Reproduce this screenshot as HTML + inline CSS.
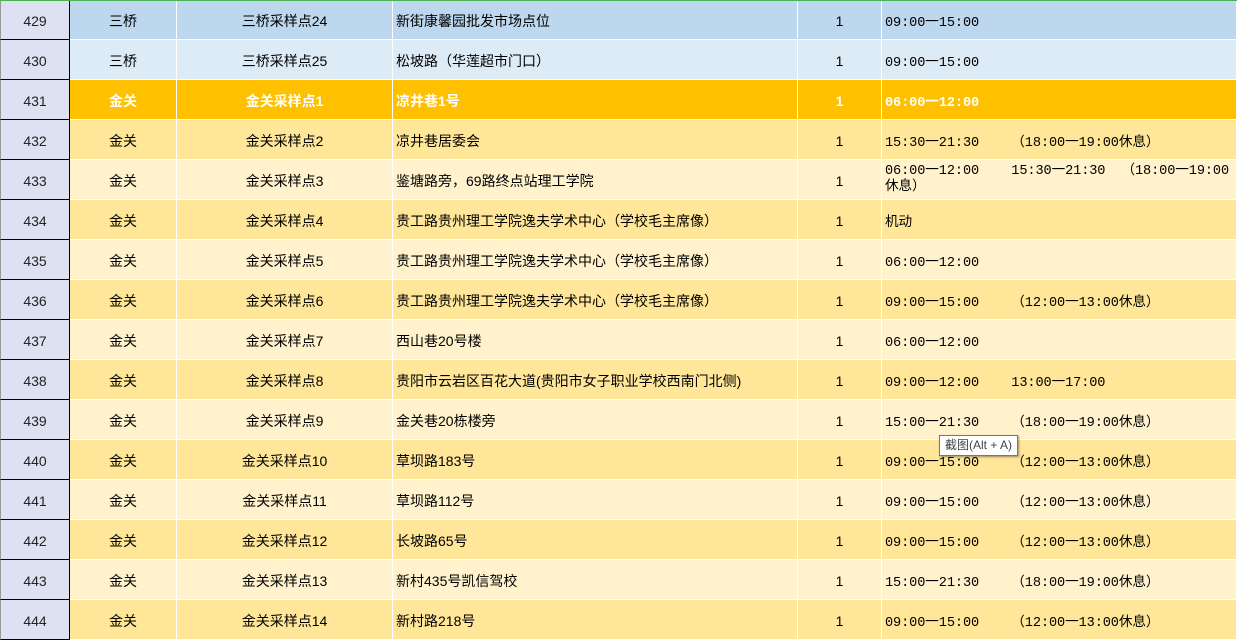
<!DOCTYPE html>
<html><head><meta charset="utf-8"><style>
*{margin:0;padding:0;box-sizing:border-box}
body{width:1237px;height:640px;overflow:hidden;background:#fff;font-family:"Liberation Sans","Noto Sans CJK SC",sans-serif;font-size:14px;color:#000;position:relative}
.r{position:absolute;left:0;width:1237px;height:40px;display:flex}
.c{height:40px;border-right:1px solid #fff;border-bottom:1px solid #fff;display:flex;align-items:center;white-space:nowrap;overflow:hidden;padding-top:2px}
.h{width:70px;background:#dde1f2;border-left:1px solid #999;border-right:1px solid #000;border-bottom:1px solid #000;justify-content:center;color:#222;font-size:14px}
.b{width:107px;justify-content:center}
.cc{width:216px;justify-content:center}
.d{width:405px;padding-left:3px}
.e{width:84px;justify-content:center}
.f{flex:1;padding-left:3px;font-family:"Liberation Mono","Noto Sans CJK SC",monospace;font-size:13.6px;letter-spacing:-0.1px}
.t1{background:#bdd7ee}.t2{background:#ddebf7}.o{background:#ffc000;color:#fff;font-weight:bold}
.y1{background:#ffe699}.y2{background:#fff2cc}
.tip{position:absolute;left:939px;top:435px;padding:1px 5px;background:#fff;border:1px solid #767676;box-shadow:1px 1px 2px rgba(0,0,0,.4);font-size:12px;color:#444;line-height:17px}
</style></head><body>
<div style="position:absolute;left:0;top:0;width:1237px;height:1px;background:#4caf50;z-index:2"></div>
<div class="r t1" style="top:0"><div class="c h">429</div><div class="c b">三桥</div><div class="c cc">三桥采样点24</div><div class="c d">新街康馨园批发市场点位</div><div class="c e">1</div><div class="c f">09:00一15:00</div></div>
<div class="r t2" style="top:40px"><div class="c h">430</div><div class="c b">三桥</div><div class="c cc">三桥采样点25</div><div class="c d">松坡路（华莲超市门口）</div><div class="c e">1</div><div class="c f">09:00一15:00</div></div>
<div class="r o" style="top:80px"><div class="c h" style="font-weight:normal;color:#222">431</div><div class="c b">金关</div><div class="c cc">金关采样点1</div><div class="c d">凉井巷1号</div><div class="c e">1</div><div class="c f" style="font-weight:bold">06:00一12:00</div></div>
<div class="r y1" style="top:120px"><div class="c h">432</div><div class="c b">金关</div><div class="c cc">金关采样点2</div><div class="c d">凉井巷居委会</div><div class="c e">1</div><div class="c f">15:30一21:30&nbsp;&nbsp;&nbsp;&nbsp;（18:00一19:00休息）</div></div>
<div class="r y2" style="top:160px"><div class="c h">433</div><div class="c b">金关</div><div class="c cc">金关采样点3</div><div class="c d">鉴塘路旁，69路终点站理工学院</div><div class="c e">1</div><div class="c f" style="line-height:16px;padding-top:0">06:00一12:00&nbsp;&nbsp;&nbsp;&nbsp;15:30一21:30&nbsp;&nbsp;（18:00一19:00<br>休息）</div></div>
<div class="r y1" style="top:200px"><div class="c h">434</div><div class="c b">金关</div><div class="c cc">金关采样点4</div><div class="c d">贵工路贵州理工学院逸夫学术中心（学校毛主席像）</div><div class="c e">1</div><div class="c f">机动</div></div>
<div class="r y2" style="top:240px"><div class="c h">435</div><div class="c b">金关</div><div class="c cc">金关采样点5</div><div class="c d">贵工路贵州理工学院逸夫学术中心（学校毛主席像）</div><div class="c e">1</div><div class="c f">06:00一12:00</div></div>
<div class="r y1" style="top:280px"><div class="c h">436</div><div class="c b">金关</div><div class="c cc">金关采样点6</div><div class="c d">贵工路贵州理工学院逸夫学术中心（学校毛主席像）</div><div class="c e">1</div><div class="c f">09:00一15:00&nbsp;&nbsp;&nbsp;&nbsp;（12:00一13:00休息）</div></div>
<div class="r y2" style="top:320px"><div class="c h">437</div><div class="c b">金关</div><div class="c cc">金关采样点7</div><div class="c d">西山巷20号楼</div><div class="c e">1</div><div class="c f">06:00一12:00</div></div>
<div class="r y1" style="top:360px"><div class="c h">438</div><div class="c b">金关</div><div class="c cc">金关采样点8</div><div class="c d">贵阳市云岩区百花大道(贵阳市女子职业学校西南门北侧)</div><div class="c e">1</div><div class="c f">09:00一12:00&nbsp;&nbsp;&nbsp;&nbsp;13:00一17:00</div></div>
<div class="r y2" style="top:400px"><div class="c h">439</div><div class="c b">金关</div><div class="c cc">金关采样点9</div><div class="c d">金关巷20栋楼旁</div><div class="c e">1</div><div class="c f">15:00一21:30&nbsp;&nbsp;&nbsp;&nbsp;（18:00一19:00休息）</div></div>
<div class="r y1" style="top:440px"><div class="c h">440</div><div class="c b">金关</div><div class="c cc">金关采样点10</div><div class="c d">草坝路183号</div><div class="c e">1</div><div class="c f">09:00一15:00&nbsp;&nbsp;&nbsp;&nbsp;（12:00一13:00休息）</div></div>
<div class="r y2" style="top:480px"><div class="c h">441</div><div class="c b">金关</div><div class="c cc">金关采样点11</div><div class="c d">草坝路112号</div><div class="c e">1</div><div class="c f">09:00一15:00&nbsp;&nbsp;&nbsp;&nbsp;（12:00一13:00休息）</div></div>
<div class="r y1" style="top:520px"><div class="c h">442</div><div class="c b">金关</div><div class="c cc">金关采样点12</div><div class="c d">长坡路65号</div><div class="c e">1</div><div class="c f">09:00一15:00&nbsp;&nbsp;&nbsp;&nbsp;（12:00一13:00休息）</div></div>
<div class="r y2" style="top:560px"><div class="c h">443</div><div class="c b">金关</div><div class="c cc">金关采样点13</div><div class="c d">新村435号凯信驾校</div><div class="c e">1</div><div class="c f">15:00一21:30&nbsp;&nbsp;&nbsp;&nbsp;（18:00一19:00休息）</div></div>
<div class="r y1" style="top:600px"><div class="c h">444</div><div class="c b">金关</div><div class="c cc">金关采样点14</div><div class="c d">新村路218号</div><div class="c e">1</div><div class="c f">09:00一15:00&nbsp;&nbsp;&nbsp;&nbsp;（12:00一13:00休息）</div></div>
<div class="tip">截图(Alt + A)</div>
</body></html>
